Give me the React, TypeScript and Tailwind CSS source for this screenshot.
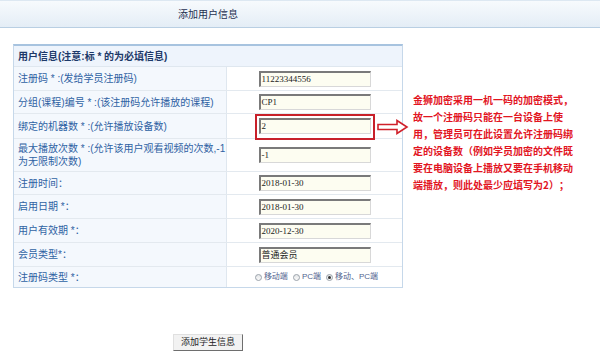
const cjk = { fontFamily: '"Liberation Sans", "Noto Sans CJK SC", sans-serif' };
const mono = { fontFamily: '"Liberation Serif", "Noto Sans CJK SC", serif' };
const note = { fontFamily: '"Noto Sans CJK SC", sans-serif' };

type Row = { label: React.ReactNode; value?: string; h: string; boxed?: boolean; radio?: boolean };

const rows: Row[] = [
  { label: '注册码 * :(发给学员注册码)', value: '11223344556', h: 'h-[24px]' },
  { label: '分组(课程)编号 * :(该注册码允许播放的课程)', value: 'CP1', h: 'h-[23px]' },
  { label: '绑定的机器数 * :(允许播放设备数)', value: '2', h: 'h-[25px]', boxed: true },
  {
    label: (
      <>
        最大播放次数 * :(允许该用户观看视频的次数,-1
        <br />
        为无限制次数)
      </>
    ),
    value: '-1',
    h: 'h-[33px]',
  },
  { label: '注册时间：', value: '2018-01-30', h: 'h-[23px]' },
  { label: '启用日期 *：', value: '2018-01-30', h: 'h-[24px]' },
  { label: '用户有效期 *：', value: '2020-12-30', h: 'h-[24px]' },
  { label: '会员类型*：', value: '普通会员', h: 'h-[24px]' },
  { label: '注册码类型 *：', h: 'h-[20px]', radio: true },
];

function Radio({ label, checked }: { label: string; checked?: boolean }) {
  return (
    <span className="flex items-center gap-[2px]">
      <span className="flex h-[7px] w-[7px] items-center justify-center rounded-full border border-[#9aa2aa] bg-gradient-to-b from-[#e4e6e8] to-[#fafafa]">
        {checked && <span className="h-[3px] w-[3px] rounded-full bg-[#333]" />}
      </span>
      <span className="text-[8px] text-[#52648f]">{label}</span>
    </span>
  );
}

function Input({ value }: { value: string }) {
  return (
    <div
      className="flex h-[16px] w-[112px] items-center border-t-2 border-l-2 border-r border-b border-t-[#7a7a7a] border-l-[#7a7a7a] border-r-[#d8d8d8] border-b-[#d8d8d8] bg-[#fdfdf1] pl-[1px] text-[9px] leading-none text-[#222]"
      style={mono}
    >
      {value}
    </div>
  );
}

export default function App() {
  return (
    <div className="relative h-[354px] w-[600px] overflow-hidden bg-white" style={cjk}>
      {/* top bar */}
      <div className="flex h-[28px] w-full border-t border-b border-t-[#dde8f2] border-b-[#b9cfe3] bg-gradient-to-b from-[#f7fafd] to-[#e4edf6]">
        <div className="flex w-[416px] items-center justify-center text-[10px] text-[#1e3050]">添加用户信息</div>
      </div>

      <div className="relative mt-[16px] flex">
        {/* form table */}
        <div className="ml-[13px] w-[390px] border-x border-b border-t-2 border-x-[#c6d8ea] border-b-[#c6d8ea] border-t-[#a7c3df]">
          <div className="flex h-[21px] items-center border-b border-[#dfe7ef] bg-[#eef4fc] pl-[4px] text-[10px] font-bold text-[#1d3969]">
            用户信息(注意:标 * 的为必填信息)
          </div>
          {rows.map((r, i) => (
            <div key={i} className={`flex ${r.h} ${i < rows.length - 1 ? 'border-b border-[#e3e9ef]' : ''}`}>
              <div className="flex w-[213px] items-center border-r border-[#dfe7ef] bg-[#f4f8fd] pl-[4px] text-[10px] leading-[13px] text-[#2f62a3]">
                <span>{r.label}</span>
              </div>
              <div className="relative flex flex-1 items-center justify-center">
                {r.radio ? (
                  <div className="ml-[4px] flex items-center gap-[5px]">
                    <Radio label="移动端" />
                    <Radio label="PC端" />
                    <Radio label="移动、PC端" checked />
                  </div>
                ) : (
                  <Input value={r.value ?? ''} />
                )}
                {r.boxed && (
                  <div className="absolute left-[28px] top-[0px] h-[26px] w-[120px] border-2 border-[#c8202a]" />
                )}
              </div>
            </div>
          ))}
        </div>

        {/* annotation arrow */}
        <svg className="absolute left-[377px] top-[75px]" width="32" height="16" viewBox="0 0 32 16">
          <polygon
            points="1,5.5 20,5.5 20,1.5 30,8 20,14.5 20,10.5 1,10.5"
            fill="#fff"
            stroke="#d0202a"
            strokeWidth="1.6"
            strokeLinejoin="miter"
          />
        </svg>

        {/* note */}
        <div
          className="ml-[10px] mt-[47px] flex flex-col whitespace-nowrap text-[10px] font-bold leading-[17px] text-[#e2151f] [text-spacing-trim:space-all]"
          style={note}
        >
          <span>金狮加密采用一机一码的加密模式，</span>
          <span>故一个注册码只能在一台设备上使</span>
          <span>用，管理员可在此设置允许注册码绑</span>
          <span>定的设备数（例如学员加密的文件既</span>
          <span>要在电脑设备上播放又要在手机移动</span>
          <span>端播放，则此处最少应填写为2）；</span>
        </div>
      </div>

      <div className="flex w-[416px] justify-center pt-[46px]">
        <button className="flex h-[17px] w-[70px] items-center justify-center border border-t-[#e0e0e0] border-l-[#e0e0e0] border-r-[#6e6e6e] border-b-[#6e6e6e] bg-[#f2f2f2] text-[9px] text-[#222]">
          添加学生信息
        </button>
      </div>
    </div>
  );
}
